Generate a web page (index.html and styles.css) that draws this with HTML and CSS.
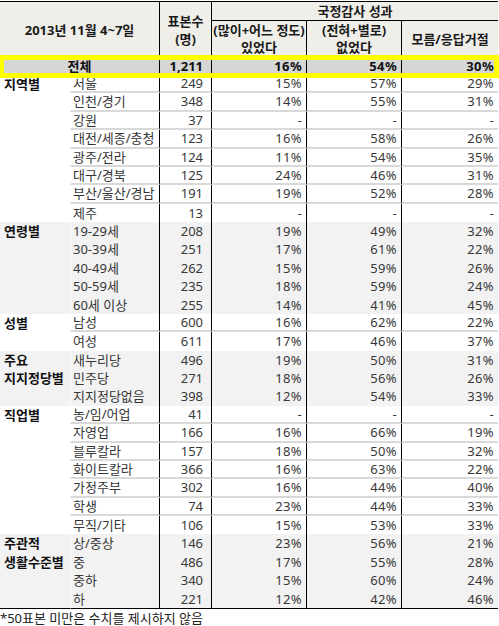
FILE: index.html
```html
<!DOCTYPE html>
<html>

<head>
  <meta charset="utf-8">
  <link rel="stylesheet" href="styles.css">
</head>

<body>
  <div class="survey">
    <table class="survey-table">
      <colgroup>
        <col class="col-cat">
        <col class="col-sub">
        <col class="col-n">
        <col class="col-pct">
        <col class="col-pct">
        <col class="col-pct-last">
      </colgroup>
      <thead>
        <tr>
          <th class="head-date line" colspan="2" rowspan="2">2013년 11월 4~7일</th>
          <th class="head-n line" rowspan="2">표본수<br>(명)</th>
          <th class="head-group" colspan="3">국정감사 성과</th>
        </tr>
        <tr>
          <th class="head-opt line">(많이+어느 정도)<br>있었다</th>
          <th class="head-opt line">(전혀+별로)<br>없었다</th>
          <th class="head-opt">모름/응답거절</th>
        </tr>
      </thead>
      <tbody class="total">
        <tr>
          <td class="total-label line" colspan="2">전체</td>
          <td class="n">1,211</td>
          <td class="p">16%</td>
          <td class="p">54%</td>
          <td class="p end">30%</td>
        </tr>
      </tbody>
      <tbody class="plain">
        <tr><td class="cat" rowspan="8">지역별</td><td class="sub">서울</td><td class="n">249</td><td class="p">15%</td><td class="p">57%</td><td class="p end">29%</td></tr>
        <tr><td class="sub">인천/경기</td><td class="n">348</td><td class="p">14%</td><td class="p">55%</td><td class="p end">31%</td></tr>
        <tr><td class="sub">강원</td><td class="n">37</td><td class="p">-</td><td class="p">-</td><td class="p end">-</td></tr>
        <tr><td class="sub">대전/세종/충청</td><td class="n">123</td><td class="p">16%</td><td class="p">58%</td><td class="p end">26%</td></tr>
        <tr><td class="sub">광주/전라</td><td class="n">124</td><td class="p">11%</td><td class="p">54%</td><td class="p end">35%</td></tr>
        <tr><td class="sub">대구/경북</td><td class="n">125</td><td class="p">24%</td><td class="p">46%</td><td class="p end">31%</td></tr>
        <tr><td class="sub">부산/울산/경남</td><td class="n">191</td><td class="p">19%</td><td class="p">52%</td><td class="p end">28%</td></tr>
        <tr><td class="sub">제주</td><td class="n">13</td><td class="p">-</td><td class="p">-</td><td class="p end">-</td></tr>
      </tbody>
      <tbody class="shaded">
        <tr><td class="cat" rowspan="5">연령별</td><td class="sub">19-29세</td><td class="n">208</td><td class="p">19%</td><td class="p">49%</td><td class="p end">32%</td></tr>
        <tr><td class="sub">30-39세</td><td class="n">251</td><td class="p">17%</td><td class="p">61%</td><td class="p end">22%</td></tr>
        <tr><td class="sub">40-49세</td><td class="n">262</td><td class="p">15%</td><td class="p">59%</td><td class="p end">26%</td></tr>
        <tr><td class="sub">50-59세</td><td class="n">235</td><td class="p">18%</td><td class="p">59%</td><td class="p end">24%</td></tr>
        <tr><td class="sub">60세 이상</td><td class="n">255</td><td class="p">14%</td><td class="p">41%</td><td class="p end">45%</td></tr>
      </tbody>
      <tbody class="plain">
        <tr><td class="cat" rowspan="2">성별</td><td class="sub">남성</td><td class="n">600</td><td class="p">16%</td><td class="p">62%</td><td class="p end">22%</td></tr>
        <tr><td class="sub">여성</td><td class="n">611</td><td class="p">17%</td><td class="p">46%</td><td class="p end">37%</td></tr>
      </tbody>
      <tbody class="shaded">
        <tr><td class="cat" rowspan="3">주요<br>지지정당별</td><td class="sub">새누리당</td><td class="n">496</td><td class="p">19%</td><td class="p">50%</td><td class="p end">31%</td></tr>
        <tr><td class="sub">민주당</td><td class="n">271</td><td class="p">18%</td><td class="p">56%</td><td class="p end">26%</td></tr>
        <tr><td class="sub">지지정당없음</td><td class="n">398</td><td class="p">12%</td><td class="p">54%</td><td class="p end">33%</td></tr>
      </tbody>
      <tbody class="plain">
        <tr><td class="cat" rowspan="7">직업별</td><td class="sub">농/임/어업</td><td class="n">41</td><td class="p">-</td><td class="p">-</td><td class="p end">-</td></tr>
        <tr><td class="sub">자영업</td><td class="n">166</td><td class="p">16%</td><td class="p">66%</td><td class="p end">19%</td></tr>
        <tr><td class="sub">블루칼라</td><td class="n">157</td><td class="p">18%</td><td class="p">50%</td><td class="p end">32%</td></tr>
        <tr><td class="sub">화이트칼라</td><td class="n">366</td><td class="p">16%</td><td class="p">63%</td><td class="p end">22%</td></tr>
        <tr><td class="sub">가정주부</td><td class="n">302</td><td class="p">16%</td><td class="p">44%</td><td class="p end">40%</td></tr>
        <tr><td class="sub">학생</td><td class="n">74</td><td class="p">23%</td><td class="p">44%</td><td class="p end">33%</td></tr>
        <tr><td class="sub">무직/기타</td><td class="n">106</td><td class="p">15%</td><td class="p">53%</td><td class="p end">33%</td></tr>
      </tbody>
      <tbody class="shaded">
        <tr><td class="cat" rowspan="4">주관적<br>생활수준별</td><td class="sub">상/중상</td><td class="n">146</td><td class="p">23%</td><td class="p">56%</td><td class="p end">21%</td></tr>
        <tr><td class="sub">중</td><td class="n">486</td><td class="p">17%</td><td class="p">55%</td><td class="p end">28%</td></tr>
        <tr><td class="sub">중하</td><td class="n">340</td><td class="p">15%</td><td class="p">60%</td><td class="p end">24%</td></tr>
        <tr><td class="sub">하</td><td class="n">221</td><td class="p">12%</td><td class="p">42%</td><td class="p end">46%</td></tr>
      </tbody>
    </table>

    <div class="highlight"></div>

    <p class="note">*50표본 미만은 수치를 제시하지 않음</p>
  </div>
</body>

</html>
```

FILE: styles.css
```css
body {
  margin: 0;
  font-family: "Noto Sans", "Noto Sans CJK KR", sans-serif;
  font-size: 13px;
  color: #383838;
}

.survey {
  position: relative;
  width: 499px;
}

.survey-table {
  width: 498px;
  margin-top: 1px;
  table-layout: fixed;
  border-collapse: separate;
  border-spacing: 0;
}

.col-cat {
  width: 70px;
}

.col-sub {
  width: 90px;
}

.col-n {
  width: 52px;
}

.col-pct {
  width: 95px;
}

.col-pct-last {
  width: 96px;
}

/* header */

th {
  padding: 0;
  background-color: #efeee9;
  color: #1a1a1a;
  font-weight: bold;
  text-align: center;
  vertical-align: middle;
}

thead tr:first-child th {
  border-top: 1px solid #000;
}

.line {
  border-right: 1px solid #000;
}

.head-date,
.head-n {
  line-height: 18px;
}

.head-group {
  line-height: 18px;
  border-bottom: 1px solid #000;
}

.head-opt {
  height: 36px;
  line-height: 17px;
}

/* body cells */

td {
  padding: 0 4px;
  line-height: 18.38px;
  white-space: nowrap;
}

.cat {
  vertical-align: top;
  font-weight: bold;
  color: #111;
  padding-left: 4px;
}

.sub {
  padding-left: 2px;
  border-left: 1px solid #fff;
  border-right: 1px solid #000;
  color: #353535;
}

.n {
  text-align: right;
  padding-right: 8px;
  border-right: 1px solid #000;
}

.p {
  text-align: right;
  padding-right: 4px;
  letter-spacing: 0.4px;
  border-right: 1px solid #000;
}

.p.end {
  border-right: none;
}

.total td {
  background-color: #d6d6d6;
  color: #111;
  font-weight: bold;
  line-height: 18px;
}

.total-label {
  text-align: center;
}

.plain td:not(.cat) {
  line-height: 16.38px;
  border-bottom: 2px solid #d9d9d9;
}

.plain tr:last-child td:not(.cat) {
  line-height: 18.38px;
  border-bottom: none;
}

.shaded td {
  background-color: #f2f2f2;
}

.survey-table tbody:last-child tr:last-child td,
.survey-table tbody:last-child .cat {
  border-bottom: 1px solid #000;
}

/* yellow box drawn over the total row */
.highlight {
  position: absolute;
  top: 54px;
  left: 0;
  width: 499px;
  height: 23px;
  box-sizing: border-box;
  border: 5px solid #ffff00;
  border-left-width: 4px;
}

.note {
  margin: 0;
  line-height: 18px;
  color: #222;
}
```
